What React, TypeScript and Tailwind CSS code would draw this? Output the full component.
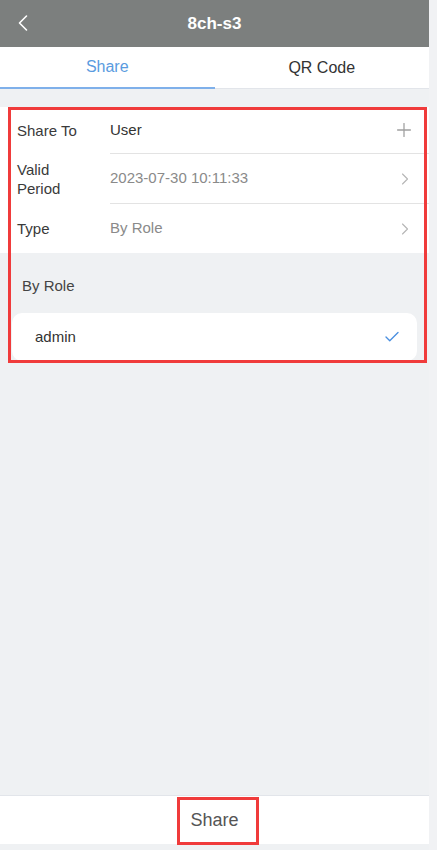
import { Check, ChevronLeft, ChevronRight, Plus } from 'lucide-react'

const font = { fontFamily: '"Liberation Sans", Arial, sans-serif' }

function Row({ label, value, valueClass, icon, height, last }: { label: string; value: string; valueClass: string; icon: React.ReactNode; height: string; last?: boolean }) {
  return (
    <div className={`flex items-stretch ${height}`}>
      <div className="w-[110px] shrink-0 flex items-center pl-[17px] pr-[30px] text-[15px] leading-[19px] text-[#3a3a3a]">
        {label}
      </div>
      <div className={`flex-1 flex items-center justify-between pr-[16px] ${last ? '' : 'border-b border-[#e3e3e3]'}`}>
        <span className={`text-[15px] ${valueClass}`}>{value}</span>
        {icon}
      </div>
    </div>
  )
}

export default function App() {
  return (
    <div className="w-[437px] h-[850px] bg-[#f1f2f4] flex relative" style={font}>
      <div className="w-[429px] h-full flex flex-col bg-[#eff1f3]">
        <div className="h-[47px] bg-[#7c7f7e] flex items-center relative shrink-0">
          <ChevronLeft className="absolute left-[9px] top-[9px] text-white" size={28} strokeWidth={1.4} />
          <div className="flex-1 text-center text-white font-bold text-[17px]">8ch-s3</div>
        </div>
        <div className="h-[42px] bg-white flex shrink-0 border-b border-[#e2e5ea]">
          <div className="flex-1 flex items-center justify-center text-[16px] text-[#5a9be0] border-b-2 border-[#7fb0ea] -mb-px">Share</div>
          <div className="flex-1 flex items-center justify-center text-[16px] text-[#333]">QR Code</div>
        </div>
        <div className="h-[18px] shrink-0" />
        <div className="bg-white flex flex-col">
          <Row height="h-[47px]" label="Share To" value="User" valueClass="text-[#333]" icon={<Plus size={22} strokeWidth={1.4} className="text-[#a0a0a0] -mr-[2px]" />} />
          <Row height="h-[50px]" label="Valid Period" value="2023-07-30 10:11:33" valueClass="text-[#8a8a8a]" icon={<ChevronRight size={20} strokeWidth={1.3} className="text-[#b5b5b5] -mr-[2px]" />} />
          <Row height="h-[49px]" label="Type" value="By Role" valueClass="text-[#8a8a8a]" icon={<ChevronRight size={20} strokeWidth={1.3} className="text-[#b5b5b5] -mr-[2px]" />} last />
        </div>
        <div className="pl-[22px] pt-[24px] pb-[18px] text-[15px] text-[#444] leading-[18px]">By Role</div>
        <div className="mx-[12px] h-[48px] bg-white rounded-[10px] flex items-center justify-between pl-[23px] pr-[16px]">
          <span className="text-[15px] text-[#333]">admin</span>
          <Check size={18} strokeWidth={1.8} className="text-[#4a8fe0]" />
        </div>
        <div className="flex-1" />
        <div className="h-[49px] bg-white border-t border-[#e2e5ea] flex items-center justify-center shrink-0">
          <span className="text-[18px] text-[#555]">Share</span>
        </div>
        <div className="h-[6px] shrink-0" />
      </div>
      <div className="absolute left-[8px] top-[107px] w-[419px] h-[256px] border-[3px] border-[#f03b3b] pointer-events-none" />
      <div className="absolute left-[177px] top-[797px] w-[82px] h-[48px] border-[3px] border-[#f03b3b] pointer-events-none" />
    </div>
  )
}
